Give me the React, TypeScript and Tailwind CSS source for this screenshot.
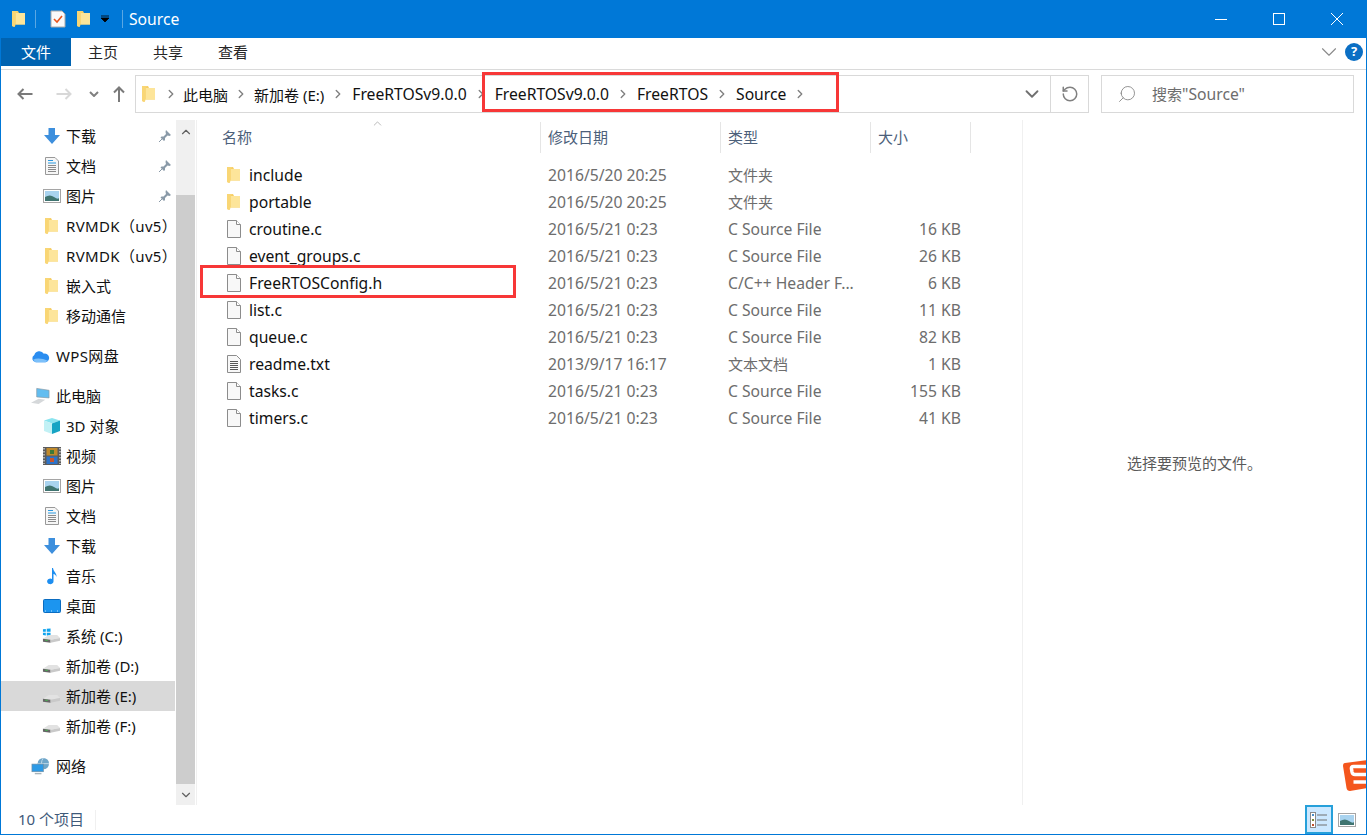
import React from 'react'
import { ChevronDown, ChevronRight, ChevronUp, RotateCw, Search } from 'lucide-react'

const FONT = { fontFamily: '"Noto Sans", "Noto Sans CJK SC", sans-serif' }

function FolderIcon() {
  return (
    <svg viewBox="0 0 16 18" className="w-[16px] h-[18px]">
      <path d="M1 1 L7 1 L8 3 L14 3 L14 14.5 L3.5 14.5 L3.5 17 L1 16 Z" fill="#f6cd63" />
      <path d="M4.5 3 H14 V14.5 H4.5 Z" fill="#fde59a" />
      <path d="M1 1 L7 1 L4.5 3 V15 L3.5 17 L1 16 Z" fill="#f9d675" />
    </svg>
  )
}

function FileIcon() {
  return (
    <svg viewBox="0 0 16 18" className="w-[16px] h-[18px]">
      <path d="M1.5 .5 H10.5 L14.5 4.5 V17.5 H1.5 Z" fill="#f8f8f8" stroke="#8c8c8c" />
      <path d="M10.5 .5 V4.5 H14.5" fill="#fff" stroke="#8c8c8c" />
    </svg>
  )
}

function TextFileIcon() {
  return (
    <svg viewBox="0 0 16 18" className="w-[16px] h-[18px]">
      <path d="M1.5 .5 H10.5 L14.5 4.5 V17.5 H1.5 Z" fill="#f8f8f8" stroke="#8c8c8c" />
      <path d="M4 6.5 H12 M4 8.5 H12 M4 10.5 H12 M4 12.5 H12 M4 14.5 H12" stroke="#555" />
    </svg>
  )
}

function DownloadIcon() {
  return (
    <svg viewBox="0 0 18 18" className="w-[18px] h-[18px]">
      <path d="M5.5 1 H12 V8 H17 L9 17 L1 8 H5.5 Z" fill="#3d8fdd" />
    </svg>
  )
}

function DocIcon() {
  return (
    <svg viewBox="0 0 16 18" className="w-[16px] h-[18px]">
      <path d="M1.5 .5 H11 L14.5 4 V17.5 H1.5 Z" fill="#f6f6f6" stroke="#999" />
      <path d="M4 3.5 H9 M4 6 H12" stroke="#2a9ae0" />
      <path d="M4 8.5 H12 M4 10.5 H12 M4 12.5 H12 M4 14.5 H12" stroke="#8a8a8a" />
    </svg>
  )
}

function PictureIcon() {
  return (
    <svg viewBox="0 0 18 14" className="w-[18px] h-[14px]">
      <rect x=".5" y=".5" width="17" height="13" fill="#fff" stroke="#a5a5a5" />
      <rect x="2" y="2" width="14" height="10" fill="#a9d3ef" />
      <path d="M2 8 Q7 5 11 8 T16 9 V12 H2 Z" fill="#3f7470" />
    </svg>
  )
}

function PinIcon() {
  return (
    <svg viewBox="0 0 14 14" className="w-[14px] h-[14px]">
      <path d="M8 1 L13 6 L11.5 7 L9.5 6.5 L7 9 L7 11 L6 12 L2.5 8.5 L3.5 7.5 L5.5 7.5 L8 5 L7.5 3 Z" fill="#8a9aa8" />
      <path d="M4 10 L1 13" stroke="#8a9aa8" />
    </svg>
  )
}

function CloudIcon() {
  return (
    <svg viewBox="0 0 20 14" className="w-[20px] h-[14px]">
      <path d="M5 13.5 A4 4 0 0 1 3.5 6 A5.5 5.5 0 0 1 13.5 4.5 A4.6 4.6 0 0 1 15.5 13.5 Z" fill="#2a8df0" />
      <path d="M2 11 Q8 8 18 12 L15 13.5 H5 Z" fill="#7cc0fa" />
    </svg>
  )
}

function PcIcon() {
  return (
    <svg viewBox="0 0 20 18" className="w-[20px] h-[18px]">
      <path d="M6 1 L19 3 V11 L6 10 Z" fill="#62bdf0" stroke="#8a9aa5" strokeWidth=".7" />
      <path d="M0 16 L8 12 L15 13 L8 17.5 Z" fill="#d5d8da" />
    </svg>
  )
}

function CubeIcon() {
  return (
    <svg viewBox="0 0 18 18" className="w-[18px] h-[18px]">
      <path d="M9 1 L17 3.5 L9 6.5 L1 3.5 Z" fill="#8be4ef" />
      <path d="M1 3.5 L9 6.5 V17 L1 14 Z" fill="#c2f1f5" />
      <path d="M17 3.5 L9 6.5 V17 L17 14 Z" fill="#16a4c4" />
    </svg>
  )
}

function VideoIcon() {
  return (
    <svg viewBox="0 0 18 18" className="w-[18px] h-[18px]">
      <rect width="18" height="18" fill="#5b5b5b" />
      <path d="M1 1 V17 M17 1 V17" stroke="#e5e5e5" strokeWidth="1.2" strokeDasharray="1.5 1.5" />
      <rect x="3.5" y="1" width="11" height="7.5" fill="#c08a2c" />
      <rect x="3.5" y="9.5" width="11" height="7.5" fill="#2e74c9" />
      <rect x="7" y="3" width="4" height="4" fill="#3d7a3a" />
      <rect x="7" y="11" width="4" height="4" fill="#c9542c" />
    </svg>
  )
}

function MusicIcon() {
  return (
    <svg viewBox="0 0 14 18" className="w-[14px] h-[18px]">
      <path d="M7 1 H8 C8.5 5 12 6 11.5 10 C11 8 9.5 7 8.5 7 V14.5 A3.2 2.8 0 1 1 7 12 Z" fill="#1d8ef0" />
    </svg>
  )
}

function DesktopIcon() {
  return (
    <svg viewBox="0 0 18 14" className="w-[18px] h-[14px]">
      <rect x=".5" y=".5" width="17" height="13" rx="1" fill="#1c95ef" stroke="#0b6cc0" />
      <path d="M2 12 H16" stroke="#bfe3ff" strokeDasharray="1 5" />
    </svg>
  )
}

function DriveIcon({ windows = false }: { windows?: boolean }) {
  return (
    <svg viewBox="0 0 20 18" className="w-[20px] h-[18px]">
      {windows && <path d="M1 2 L4 1.5 V4.5 H1 Z M5 1.4 L9 1 V4.5 H5 Z M1 5.5 H4 V8.5 L1 8 Z M5 5.5 H9 V9 L5 8.6 Z" fill="#10a4ee" />}
      <path d="M1 12 L7 8 H16 L19 11 L9 13 Z" fill="#e2e2e2" />
      <path d="M1 12 L9 13 V16 L1 15 Z" fill="#666" />
      <path d="M9 13 L19 11 V14 L9 16 Z" fill="#c9c9c9" />
      <path d="M3.5 13.5 H6" stroke="#46c24e" />
    </svg>
  )
}

function NetworkIcon() {
  return (
    <svg viewBox="0 0 20 18" className="w-[20px] h-[18px]">
      <circle cx="13" cy="6.5" r="6" fill="#6fa6c9" />
      <path d="M13 .5 Q9 6 13 12.5 M7 6.5 H19" stroke="#d3e6f2" fill="none" strokeWidth=".8" />
      <rect x="1" y="7" width="12" height="8" fill="#2c9ae6" stroke="#6f8ea3" strokeWidth=".7" />
      <path d="M4 17 H11" stroke="#a9b4ba" strokeWidth="1.5" />
    </svg>
  )
}

function NavRow({ icon, label, pinned, active, indent = true, wide }: { icon: React.ReactNode; label: string; pinned?: boolean; active?: boolean; indent?: boolean; wide?: boolean }) {
  return (
    <div className={`h-[30px] flex items-center text-[15px] text-[#111] ${indent ? 'pl-[41px]' : 'pl-[30px]'} ${active ? 'bg-[#d9d9d9]' : ''}`}>
      <span className="w-[19px] shrink-0 flex justify-center">{icon}</span>
      <span className={`${indent ? 'ml-[5px]' : 'ml-[6px]'} shrink-0 whitespace-pre ${wide ? 'tracking-[0.35px]' : ''}`}>{label}</span>
      {pinned && <span className="ml-auto mr-[3px] flex"><PinIcon /></span>}
    </div>
  )
}

const FILES = [
  { name: 'include', date: '2016/5/20 20:25', type: '文件夹', size: '', kind: 'folder' },
  { name: 'portable', date: '2016/5/20 20:25', type: '文件夹', size: '', kind: 'folder' },
  { name: 'croutine.c', date: '2016/5/21 0:23', type: 'C Source File', size: '16 KB', kind: 'file' },
  { name: 'event_groups.c', date: '2016/5/21 0:23', type: 'C Source File', size: '26 KB', kind: 'file' },
  { name: 'FreeRTOSConfig.h', date: '2016/5/21 0:23', type: 'C/C++ Header F...', size: '6 KB', kind: 'file' },
  { name: 'list.c', date: '2016/5/21 0:23', type: 'C Source File', size: '11 KB', kind: 'file' },
  { name: 'queue.c', date: '2016/5/21 0:23', type: 'C Source File', size: '82 KB', kind: 'file' },
  { name: 'readme.txt', date: '2013/9/17 16:17', type: '文本文档', size: '1 KB', kind: 'text' },
  { name: 'tasks.c', date: '2016/5/21 0:23', type: 'C Source File', size: '155 KB', kind: 'file' },
  { name: 'timers.c', date: '2016/5/21 0:23', type: 'C Source File', size: '41 KB', kind: 'file' },
]

function Crumb({ label, latin, tight }: { label: string; latin?: boolean; tight?: boolean }) {
  return (
    <>
      <span className={`${latin ? 'text-[15.7px]' : 'text-[15px]'} pt-[2px] text-[#111] whitespace-pre`}>{label}</span>
      <ChevronRight size={14} strokeWidth={2.4} className={`text-[#808080] ${tight ? 'mx-[6px]' : 'mx-[7px]'}`} />
    </>
  )
}

export default function App() {
  return (
    <div className="relative w-[1367px] h-[835px] overflow-hidden flex flex-col bg-white border-x border-b border-[#0078d7]" style={FONT}>
      {/* title bar */}
      <div className="h-[38px] bg-[#0078d7] flex items-center text-white shrink-0">
        <span className="ml-[10px] flex"><FolderIcon /></span>
        <span className="ml-[8px] w-px h-[18px] bg-[#5aa7e3]" />
        <svg viewBox="0 0 16 18" className="w-[16px] h-[18px] ml-[14px]">
          <path d="M1 1 H12 L15 4 V17 H1 Z" fill="#fafafa" stroke="#aaa" />
          <path d="M4 9 L7 12 L12 6" fill="none" stroke="#e8541d" strokeWidth="1.6" />
        </svg>
        <span className="ml-[10px] flex"><FolderIcon /></span>
        <svg viewBox="0 0 8 8" className="w-[8px] h-[8px] ml-[9px]">
          <path d="M0 1 H8 M0 3 H8 L4 7 Z" stroke="#000" fill="#000" strokeWidth=".8" />
        </svg>
        <span className="ml-[13px] w-px h-[18px] bg-[#5aa7e3]" />
        <span className="ml-[6px] pt-[2px] text-[15.7px]">Source</span>
        <div className="ml-auto flex items-center mr-[23px] gap-[46px]">
          <svg viewBox="0 0 12 12" className="w-[12px] h-[12px]"><path d="M0 6.5 H12" stroke="#fff" /></svg>
          <svg viewBox="0 0 12 12" className="w-[12px] h-[12px]"><rect x=".5" y=".5" width="11" height="11" fill="none" stroke="#fff" /></svg>
          <svg viewBox="0 0 12 12" className="w-[12px] h-[12px]"><path d="M0 0 L12 12 M12 0 L0 12" stroke="#fff" /></svg>
        </div>
      </div>

      {/* ribbon tabs */}
      <div className="h-[32px] shrink-0 flex border-b border-[#dadada] pb-[3px] text-[15px] text-[#262626]">
        <div className="w-[70px] bg-[#0063b1] text-white flex items-center justify-center">文件</div>
        <span className="ml-[17px] self-center">主页</span>
        <span className="ml-[35px] self-center">共享</span>
        <span className="ml-[35px] self-center">查看</span>
        <div className="ml-auto flex items-center">
          <ChevronDown size={26} strokeWidth={1} className="text-[#8a8a8a] mr-[3px]" />
          <div className="w-[18px] h-[18px] mr-[3px] rounded-full bg-[#0b6fc4] text-white text-[13px] font-bold flex items-center justify-center">?</div>
        </div>
      </div>

      {/* address row */}
      <div className="h-[48px] shrink-0 flex items-center">
        <svg viewBox="0 0 16 12" className="w-[16px] h-[12px] ml-[16px]"><path d="M15.5 6 H1.5 M6.5 1 L1.5 6 L6.5 11" fill="none" stroke="#7a7a7a" strokeWidth="2" /></svg>
        <svg viewBox="0 0 16 12" className="w-[16px] h-[12px] ml-[23px]"><path d="M.5 6 H14.5 M9.5 1 L14.5 6 L9.5 11" fill="none" stroke="#d8d8d8" strokeWidth="2" /></svg>
        <svg viewBox="0 0 10 6" className="w-[10px] h-[6px] ml-[17px]"><path d="M1 1 L5 5 L9 1" fill="none" stroke="#808080" strokeWidth="2" /></svg>
        <svg viewBox="0 0 12 16" className="w-[12px] h-[16px] ml-[14px]"><path d="M6 16 V1.5 M1 6.5 L6 1.5 L11 6.5" fill="none" stroke="#7a7a7a" strokeWidth="2" /></svg>
        <div className="ml-[10px] w-[954px] h-[38px] border border-[#d9d9d9] flex items-center">
          <span className="ml-[5px] flex"><FolderIcon /></span>
          <ChevronRight size={14} strokeWidth={2.4} className="text-[#808080] ml-[7px] mr-[5px]" />
          <Crumb label="此电脑" tight />
          <Crumb label="新加卷 (E:)" />
          <Crumb label="FreeRTOSv9.0.0" latin />
          <Crumb label="FreeRTOSv9.0.0" latin />
          <Crumb label="FreeRTOS" latin />
          <Crumb label="Source" latin />
          <div className="ml-auto flex items-center h-full">
            <ChevronDown size={22} strokeWidth={2} className="text-[#707070] mr-[7px]" />
            <div className="w-px h-full bg-[#d9d9d9]" />
            <RotateCw size={18} strokeWidth={2} className="text-[#808080] ml-[10px] mr-[9px] -scale-x-100" />
          </div>
        </div>
        <div className="ml-[12px] w-[253px] h-[38px] border border-[#d9d9d9] flex items-center text-[15px] text-[#6d6d6d]">
          <Search size={20} strokeWidth={1} className="ml-[15px] text-[#808080] -scale-x-100" />
          <span className="ml-[15px] pt-[2px]">搜索<span className="text-[15.7px]">"Source"</span></span>
        </div>
      </div>

      {/* main area */}
      <div className="flex-1 flex min-h-0 pt-[2px]">
        {/* nav pane */}
        <div className="w-[174px] shrink-0 pt-[1px]">
          <NavRow icon={<DownloadIcon />} label="下载" pinned />
          <NavRow icon={<DocIcon />} label="文档" pinned />
          <NavRow icon={<PictureIcon />} label="图片" pinned />
          <NavRow icon={<FolderIcon />} label="RVMDK（uv5）" wide />
          <NavRow icon={<FolderIcon />} label="RVMDK（uv5）" wide />
          <NavRow icon={<FolderIcon />} label="嵌入式" />
          <NavRow icon={<FolderIcon />} label="移动通信" />
          <div className="h-[10px]" />
          <NavRow icon={<CloudIcon />} label="WPS网盘" indent={false} wide />
          <div className="h-[10px]" />
          <NavRow icon={<PcIcon />} label="此电脑" indent={false} />
          <NavRow icon={<CubeIcon />} label="3D 对象" />
          <NavRow icon={<VideoIcon />} label="视频" />
          <NavRow icon={<PictureIcon />} label="图片" />
          <NavRow icon={<DocIcon />} label="文档" />
          <NavRow icon={<DownloadIcon />} label="下载" />
          <NavRow icon={<MusicIcon />} label="音乐" />
          <NavRow icon={<DesktopIcon />} label="桌面" />
          <NavRow icon={<DriveIcon windows />} label="系统 (C:)" />
          <NavRow icon={<DriveIcon />} label="新加卷 (D:)" />
          <NavRow icon={<DriveIcon />} label="新加卷 (E:)" active />
          <NavRow icon={<DriveIcon />} label="新加卷 (F:)" />
          <div className="h-[10px]" />
          <NavRow icon={<NetworkIcon />} label="网络" indent={false} />
        </div>

        {/* nav scrollbar */}
        <div className="w-[19px] ml-[1px] shrink-0 flex flex-col bg-[#f0f0f0]">
          <div className="h-[75px] pt-[5px] flex justify-center items-start">
            <ChevronUp size={14} strokeWidth={2} className="text-[#606060]" />
          </div>
          <div className="flex-1 bg-[#cdcdcd]" />
          <div className="h-[21px] flex items-center justify-center">
            <ChevronDown size={14} strokeWidth={2} className="text-[#606060]" />
          </div>
        </div>

        {/* file list */}
        <div className="w-[827px] ml-[1px] shrink-0 border-l border-[#f0f0f0] border-r">
          <div className="relative h-[33px] pt-[2px] flex text-[15px] text-[#4c607a]">
            <ChevronUp size={13} strokeWidth={1} className="absolute left-[174px] -top-[3px] text-[#808080]" />
            <div className="w-[344px] pl-[25px] border-r border-[#e5e5e5] flex items-center">名称</div>
            <div className="w-[180px] pl-[7px] border-r border-[#e5e5e5] flex items-center">修改日期</div>
            <div className="w-[150px] pl-[7px] border-r border-[#e5e5e5] flex items-center">类型</div>
            <div className="w-[100px] pl-[7px] border-r border-[#e5e5e5] flex items-center">大小</div>
          </div>
          <div className="pt-[9px]">
            {FILES.map(f => (
              <div key={f.name} className="h-[27px] flex items-center text-[15.7px]">
                <div className="w-[343px] flex items-center pl-[29px] text-[#111]">
                  {f.kind === 'folder' ? <FolderIcon /> : f.kind === 'text' ? <TextFileIcon /> : <FileIcon />}
                  <span className="ml-[7px]">{f.name}</span>
                </div>
                <div className="w-[180px] pl-[8px] text-[#6d6d6d]">{f.date}</div>
                <div className={`w-[150px] pl-[8px] text-[#6d6d6d] whitespace-pre ${f.type.startsWith('C') ? '' : 'text-[15px]'}`}>{f.type}</div>
                <div className="w-[91px] text-right text-[#6d6d6d]">{f.size}</div>
              </div>
            ))}
          </div>
        </div>

        {/* preview pane */}
        <div className="flex-1 flex items-center justify-center pt-[1px] text-[15px] text-[#5a5a5a]">
          <span>选择要预览的文件。</span>
        </div>
      </div>

      {/* status bar */}
      <div className="h-[29px] shrink-0 flex items-center text-[15px] text-[#3f5a7a]">
        <span className="ml-[17px]">10 个项目</span>
        <span className="ml-[11px] w-px h-[20px] bg-[#f0f0f0]" />
        <div className="ml-auto flex items-center h-full">
          <div className="w-[28px] h-full bg-[#cce8ff] border-2 border-[#26a0da] flex items-center justify-center">
            <svg viewBox="0 0 18 16" className="w-[18px] h-[16px]">
              <rect x=".5" y=".5" width="5" height="15" fill="#fff" stroke="#8a8a8a" />
              <path d="M2 3 H4" stroke="#4a8fc9" strokeWidth="2" />
              <path d="M2 8 H4" stroke="#7a8a3a" strokeWidth="2" />
              <path d="M2 13 H4" stroke="#c0502c" strokeWidth="2" />
              <path d="M7 3 H17 M7 8 H17 M7 13 H17" stroke="#707070" />
            </svg>
          </div>
          <span className="ml-[5px] mr-[10px] flex"><PictureIcon /></span>
        </div>
      </div>

      {/* red annotation boxes */}
      <div className="absolute left-[481px] top-[72px] w-[357px] h-[40px] border-[3px] border-[#f73737]" />
      <div className="absolute left-[199px] top-[265px] w-[316px] h-[33px] border-[3px] border-[#f73737]" />

      {/* sogou badge */}
      <svg viewBox="0 0 24 32" className="absolute -right-px top-[759px] w-[24px] h-[32px]">
        <path d="M2 4 L24 1 V29 L7 32 Q4 32 3.5 29 L0 7 Q0 4 2 4 Z" fill="#f4561d" />
        <path d="M24 7.5 H10.5 Q8 7.5 8.5 10 L9 13 Q9.5 15.5 12 15.5 H24" fill="none" stroke="#fff" strokeWidth="3.5" />
        <path d="M10.5 23 H24" fill="none" stroke="#fff" strokeWidth="3.5" />
      </svg>
    </div>
  )
}
